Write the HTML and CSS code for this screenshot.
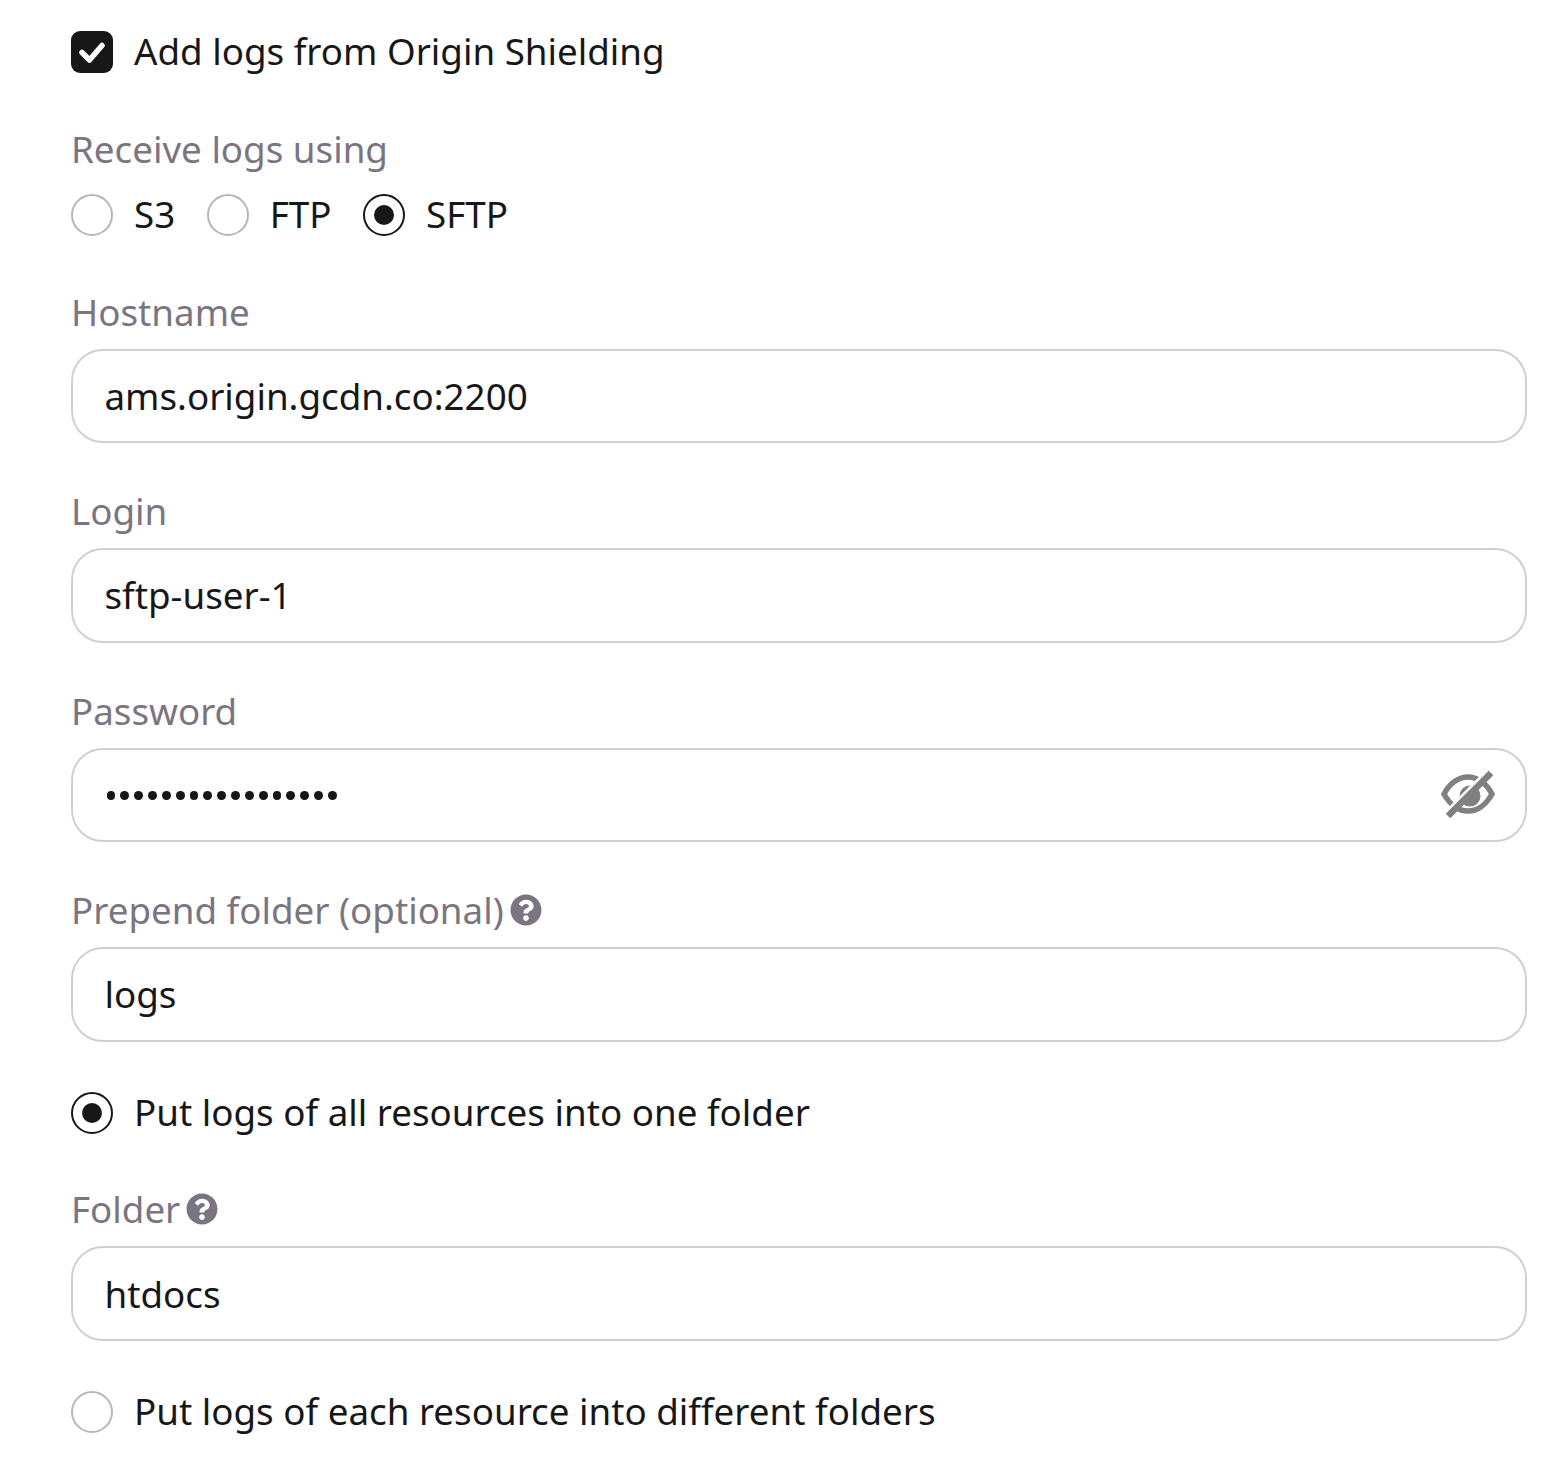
FILE: index.html
```html
<!DOCTYPE html>
<html lang="en">
<head>
    <meta charset="UTF-8">
    <meta name="viewport" content="width=device-width, initial-scale=1.0">
    <title>Log delivery settings</title>
    <link rel="stylesheet" href="styles.css">
</head>
<body>

    <form class="settings">
        <label class="option option-top">
            <span class="box">
                <svg viewBox="0 0 42 42" width="42" height="42"><path d="M11 21.500l7.500 7.500L31 14.500" fill="none" stroke="#fff" stroke-width="5.500" stroke-linecap="round" stroke-linejoin="round"/></svg>
            </span>
            Add logs from Origin Shielding
        </label>

        <div class="group group-receive">
            <div class="field-label">Receive logs using</div>
            <div class="radio-row">
                <label class="option"><span class="radio"></span>S3</label>
                <label class="option"><span class="radio"></span>FTP</label>
                <label class="option"><span class="radio checked"></span>SFTP</label>
            </div>
        </div>

        <div class="group">
            <div class="field-label">Hostname</div>
            <div class="input">ams.origin.gcdn.co:2200</div>
        </div>

        <div class="group">
            <div class="field-label">Login</div>
            <div class="input">sftp-user-1</div>
        </div>

        <div class="group">
            <div class="field-label">Password</div>
            <div class="input">
                <span class="dots"><i></i><i></i><i></i><i></i><i></i><i></i><i></i><i></i><i></i><i></i><i></i><i></i><i></i><i></i><i></i><i></i><i></i></span>
                <svg class="eye" viewBox="0 0 54 50" width="54" height="50">
                    <path d="M3 24C9 13 18 7 27 7s18 6 24 17c-6 11-15 17-24 17S9 35 3 24z" fill="none" stroke="#808080" stroke-width="5.500"/>
                    <circle cx="29" cy="26" r="10.500" fill="#808080"/>
                    <path d="M4 44L47 1" stroke="#fff" stroke-width="4.500"/>
                    <path d="M7 46L50 3" stroke="#808080" stroke-width="6.500"/>
                </svg>
            </div>
        </div>

        <div class="group">
            <div class="field-label">Prepend folder (optional)
                <svg class="help" viewBox="0 0 512 512" width="32" height="32"><path d="M504 256c0 136.997-111.043 248-248 248S8 392.997 8 256C8 119.083 119.043 8 256 8s248 111.083 248 248zM262.655 90c-54.497 0-89.255 22.957-116.549 63.758-3.536 5.286-2.353 12.415 2.715 16.258l34.699 26.31c5.205 3.947 12.621 3.008 16.665-2.122 17.864-22.658 30.113-35.797 57.303-35.797 20.429 0 45.698 13.148 45.698 32.958 0 14.976-12.363 22.667-32.534 33.976C247.128 238.528 216 254.941 216 296v4c0 6.627 5.373 12 12 12h56c6.627 0 12-5.373 12-12v-1.333c0-28.462 83.186-29.647 83.186-106.667 0-58.002-60.165-102-116.531-102zM256 338c-25.365 0-46 20.635-46 46 0 25.364 20.635 46 46 46s46-20.636 46-46c0-25.365-20.635-46-46-46z"/></svg>
            </div>
            <div class="input">logs</div>
        </div>

        <label class="option option-one"><span class="radio checked"></span>Put logs of all resources into one folder</label>

        <div class="group group-folder">
            <div class="field-label">Folder
                <svg class="help" viewBox="0 0 512 512" width="32" height="32"><path d="M504 256c0 136.997-111.043 248-248 248S8 392.997 8 256C8 119.083 119.043 8 256 8s248 111.083 248 248zM262.655 90c-54.497 0-89.255 22.957-116.549 63.758-3.536 5.286-2.353 12.415 2.715 16.258l34.699 26.31c5.205 3.947 12.621 3.008 16.665-2.122 17.864-22.658 30.113-35.797 57.303-35.797 20.429 0 45.698 13.148 45.698 32.958 0 14.976-12.363 22.667-32.534 33.976C247.128 238.528 216 254.941 216 296v4c0 6.627 5.373 12 12 12h56c6.627 0 12-5.373 12-12v-1.333c0-28.462 83.186-29.647 83.186-106.667 0-58.002-60.165-102-116.531-102zM256 338c-25.365 0-46 20.635-46 46 0 25.364 20.635 46 46 46s46-20.636 46-46c0-25.365-20.635-46-46-46z"/></svg>
            </div>
            <div class="input">htdocs</div>
        </div>

        <label class="option option-each"><span class="radio"></span>Put logs of each resource into different folders</label>
    </form>

</body>
</html>
```

FILE: styles.css
```css
body {
    margin: 0;
    background-color: #ffffff;
    color: #171717;
    font-family: "Noto Sans", sans-serif;
    font-size: 36.75px;
}

.settings {
    display: flex;
    flex-direction: column;
    padding: 26px 31px 0 71px;
}

.option {
    display: flex;
    align-items: center;
    gap: 21px;
    height: 50px;
    line-height: 50px;
}

.box {
    width: 42px;
    height: 42px;
    flex: none;
    margin-top: 2px;
    border-radius: 9px;
    background-color: #171717;
}

.box svg {
    display: block;
}

.radio {
    display: flex;
    align-items: center;
    justify-content: center;
    width: 42px;
    height: 42px;
    flex: none;
    margin-top: 2px;
    box-sizing: border-box;
    border: 2px solid #b9b5bd;
    border-radius: 50%;
    background-color: #ffffff;
}

.radio.checked {
    border-color: #171717;
}

.radio.checked::after {
    content: '';
    width: 20px;
    height: 20px;
    border-radius: 50%;
    background-color: #171717;
}

.group {
    margin-top: 42.95px;
}

.group-receive {
    margin-top: 48px;
}

.field-label {
    display: flex;
    align-items: center;
    gap: 6px;
    height: 50px;
    line-height: 50px;
    margin-bottom: 12px;
    color: #7b7481;
}

.group-receive .field-label {
    margin-bottom: 0;
}

.help {
    margin-top: -1px;
    fill: #7b7481;
}

.radio-row {
    display: flex;
    gap: 31.5px;
    margin-top: 15px;
    margin-bottom: 4.8px;
}

.input {
    display: flex;
    align-items: center;
    justify-content: space-between;
    box-sizing: border-box;
    height: 94.5px;
    padding: 0 32px 0 31.5px;
    border: 2px solid #d1cfd5;
    border-radius: 32px;
    line-height: 50px;
}

.dots {
    display: flex;
    gap: 5.06px;
    margin-top: 2px;
    margin-left: 2px;
}

.dots i {
    width: 8.8px;
    height: 9px;
    border-radius: 50%;
    background-color: #171717;
}

.eye {
    margin-right: -2px;
}

.option-one {
    margin-top: 45px;
}

.group-folder {
    margin-top: 47.85px;
}

.option-each {
    margin-top: 45.15px;
}
```
